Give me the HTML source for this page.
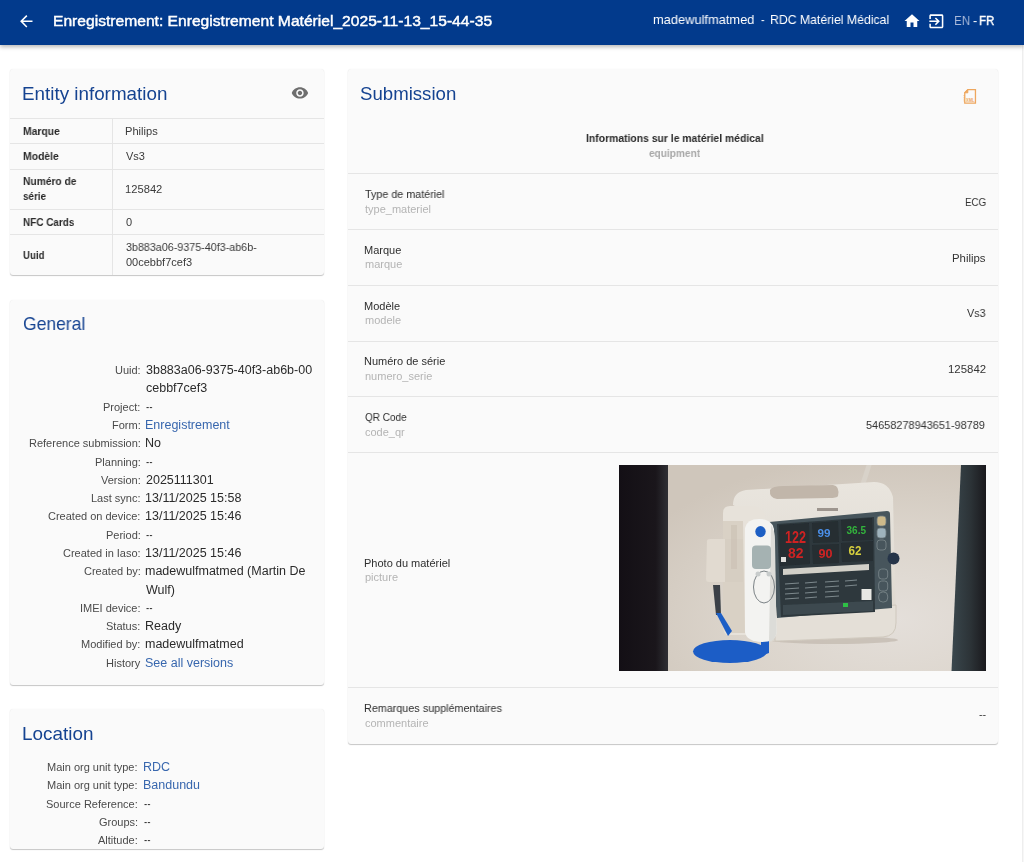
<!DOCTYPE html>
<html><head><meta charset="utf-8">
<style>
*{box-sizing:border-box;margin:0;padding:0}
html,body{width:1024px;height:862px;overflow:hidden;background:#fff;font-family:"Liberation Sans",sans-serif}
.x{position:absolute;white-space:pre;transform-origin:0 0;z-index:10;will-change:transform}
.hdr{position:absolute;left:0;top:0;width:1024px;height:44.5px;background:#023a8c;box-shadow:0 2px 4px rgba(0,0,0,.28);z-index:5}
.sb{position:absolute;left:1022px;top:44px;width:2px;height:818px;background:#f7f7f7;border-left:1px solid #eeeeee}
.card{position:absolute;background:#fafafa;border-radius:3px;box-shadow:0 1px 1px rgba(0,0,0,.22),0 0 1px rgba(0,0,0,.10)}
.hl{position:absolute;height:1px;background:#e5e5e5}
.vl{position:absolute;width:1px;background:#e5e5e5}
svg{position:absolute}
</style></head><body>
<div class="hdr">
  <svg style="left:16.7px;top:11.5px" width="18.6" height="18.6" viewBox="0 0 24 24"><path d="M20 11H7.83l5.59-5.59L12 4l-8 8 8 8 1.41-1.41L7.83 13H20v-2z" fill="#fff"/></svg>
  <svg style="left:902.8px;top:12.2px" width="18" height="18" viewBox="0 0 24 24"><path d="M10 20v-6h4v6h5v-8h3L12 3 2 12h3v8z" fill="#fff"/></svg>
  <svg style="left:926.7px;top:11.7px" width="18.7" height="18.7" viewBox="0 0 24 24"><path d="M10.09 15.59L11.5 17l5-5-5-5-1.41 1.41L12.67 11H3v2h9.67l-2.58 2.59zM19 3H5c-1.11 0-2 .9-2 2v4h2V5h14v14H5v-4H3v4c0 1.1.89 2 2 2h14c1.1 0 2-.9 2-2V5c0-1.1-.9-2-2-2z" fill="#fff"/></svg>
</div>
<div class="sb"></div>

<!-- Entity information -->
<div class="card" style="left:10px;top:68.5px;width:314px;height:206.5px"></div>
<div class="hl" style="left:10px;top:118px;width:314px"></div>
<div class="hl" style="left:10px;top:143px;width:314px"></div>
<div class="hl" style="left:10px;top:169px;width:314px"></div>
<div class="hl" style="left:10px;top:209px;width:314px"></div>
<div class="hl" style="left:10px;top:234px;width:314px"></div>
<div class="vl" style="left:112px;top:118px;height:157px"></div>
<svg style="left:291.3px;top:84.4px" width="17.9" height="17.9" viewBox="0 0 24 24"><path d="M12 4.5C7 4.5 2.73 7.61 1 12c1.73 4.39 6 7.5 11 7.5s9.27-3.11 11-7.5c-1.73-4.39-6-7.5-11-7.5zM12 17c-2.76 0-5-2.24-5-5s2.24-5 5-5 5 2.24 5 5-2.24 5-5 5zm0-8c-1.66 0-3 1.34-3 3s1.34 3 3 3 3-1.34 3-3-1.34-3-3-3z" fill="#6e6e6e"/></svg>

<!-- General -->
<div class="card" style="left:10px;top:299.5px;width:314px;height:385.5px"></div>

<!-- Location -->
<div class="card" style="left:10px;top:708.6px;width:314px;height:140.8px"></div>

<!-- Submission -->
<div class="card" style="left:347.5px;top:68.6px;width:650.5px;height:675.2px"></div>
<div class="hl" style="left:347.5px;top:172.5px;width:650.5px"></div>
<div class="hl" style="left:347.5px;top:228.8px;width:650.5px"></div>
<div class="hl" style="left:347.5px;top:284.8px;width:650.5px"></div>
<div class="hl" style="left:347.5px;top:340.5px;width:650.5px"></div>
<div class="hl" style="left:347.5px;top:396px;width:650.5px"></div>
<div class="hl" style="left:347.5px;top:451.8px;width:650.5px"></div>
<div class="hl" style="left:347.5px;top:687px;width:650.5px"></div>
<svg style="left:963px;top:88px" width="14" height="17" viewBox="0 0 14 17">
  <path d="M4.8 1.55 H12.45 V15.15 H1.75 V4.8 Z" fill="none" stroke="#eea75e" stroke-width="1.3" stroke-linejoin="miter"/>
  <path d="M1.75 4.8 L4.8 1.55 L4.8 4.8 Z" fill="#eea75e" stroke="#eea75e" stroke-width="1"/>
  <g stroke="#eea75e" stroke-width="0.8"><path d="M0.6 7.5H1.8M0.6 9.3H1.8M0.6 11.1H1.8M0.6 12.9H1.8"/></g>
  <text x="3.1" y="14.3" font-size="5.6" font-family="Liberation Sans" font-weight="bold" fill="#eea75e" textLength="8.4" lengthAdjust="spacingAndGlyphs">XML</text>
</svg>

<!-- Photo -->
<svg style="left:619px;top:465px" width="367" height="206" viewBox="0 0 367 206">
  <defs>
    <linearGradient id="bg" x1="0" y1="0" x2="1" y2="0.35">
      <stop offset="0" stop-color="#d3cbc1"/>
      <stop offset="0.5" stop-color="#ddd7cf"/>
      <stop offset="1" stop-color="#e9e5e1"/>
    </linearGradient>
    <linearGradient id="lb" x1="0" y1="0" x2="1" y2="0">
      <stop offset="0" stop-color="#130f15"/>
      <stop offset="0.75" stop-color="#1a161b"/>
      <stop offset="1" stop-color="#2f2f34"/>
    </linearGradient>
    <linearGradient id="rb" x1="0" y1="0" x2="1" y2="0">
      <stop offset="0" stop-color="#3a474d"/>
      <stop offset="0.55" stop-color="#2c3337"/>
      <stop offset="1" stop-color="#1a191d"/>
    </linearGradient>
    <linearGradient id="top" x1="0" y1="0" x2="0" y2="1">
      <stop offset="0" stop-color="#e9e5de"/>
      <stop offset="1" stop-color="#dcd6cd"/>
    </linearGradient>
    <radialGradient id="vig" cx="0.75" cy="0.75" r="0.8"><stop offset="0" stop-color="#e4dfda"/><stop offset="0.55" stop-color="#dbd4cb"/><stop offset="1" stop-color="#cfc6bb"/></radialGradient>
    <filter id="soft" filterUnits="userSpaceOnUse" x="0" y="0" width="367" height="206"><feGaussianBlur stdDeviation="0.5"/></filter>
  </defs>
  <rect width="367" height="206" fill="url(#vig)"/>
  <rect x="0" y="0" width="49" height="206" fill="url(#lb)"/>
  <path d="M342 0 H367 V206 H332.5 Z" fill="url(#rb)"/>
  <g filter="url(#soft)">
    <!-- shadow under device -->
    <ellipse cx="215" cy="175" rx="64" ry="4" fill="#c4bbb1" opacity="0.8"/>
    <!-- antenna -->
    <path d="M247.5 0 L252.5 0 L244.5 25 L239.5 25 Z" fill="#d8d2c9"/>
    <!-- main body -->
    <path d="M114 40 Q114 27 127 25 L255 17 Q270 17 274 32 L277 158 Q277 171 264 172 L160 176 L152 176 L150 60 Z" fill="url(#top)"/>
    <!-- recess -->
    <path d="M151 25 Q153 21 165 21 L214 20 Q221 21 219 31 Q218 33 210 33 L158 34 Q150 33 151 25 Z" fill="#c1b6aa"/>
    <!-- philips -->
    <rect x="198" y="43" width="21" height="3" fill="#8f8780" opacity="0.85"/>
    <!-- side module -->
    <path d="M104 48 Q104 41 111 41 L134 41 Q142 42 146 50 L150 170 L108 170 Q104 168 104 160 Z" fill="#e7e2da"/>
    <path d="M104 56 L124 56 L126 168 L108 168 Q104 166 104 160 Z" fill="#d9d1c5"/>
    <!-- lower module -->
    <path d="M88 76 Q88 74 91 74 L106 74 L106 117 L90 117 Q87 117 87 114 Z" fill="#e1dad0"/>
    <path d="M106 74 L124 74 L124 117 L106 117 Z" fill="#d6cec2"/>
    <rect x="112" y="60" width="6" height="44" fill="#c9c0b3" opacity="0.6"/>
    <!-- cable -->
    <path d="M94 120 L101 120 L102 150 L97 150 Z" fill="#3a4046"/>
    <path d="M97 148 L102 148 L113 166 L109 171 Z" fill="#1f5ec6"/>
    <!-- blue coil -->
    <ellipse cx="111" cy="186.5" rx="37" ry="11.5" fill="#1d5dc6"/>
    <path d="M142 175 L150 175 L150 188 L142 191 Z" fill="#1d5dc6"/>
    <!-- lower face below screen -->
    <path d="M156 150 L277 140 L277 158 Q277 171 264 172 L160 176 L156 176 Z" fill="#e4dfd7" stroke="#cfc8bd" stroke-width="1"/>
    <!-- screen bezel -->
    <path d="M150 57 L268 46 Q271 46 271 49 L273 143 L158 153 Z" fill="#46555b"/>
    <!-- display -->
    <path d="M158 59 L255 52 L256 147 L162 152 Z" fill="#2e383d"/>
    <!-- panels -->
    <path d="M160 60 L190 58 L191 99 L161 101 Z" fill="#252d31"/>
    <path d="M193 58 L219 56 L220 77 L194 78 Z" fill="#252d31"/>
    <path d="M193 80 L220 79 L220 98 L194 99 Z" fill="#252d31"/>
    <path d="M222 55 L253 53 L254 75 L223 76 Z" fill="#252d31"/>
    <path d="M222 78 L254 76 L254 96 L223 97 Z" fill="#252d31"/>
    <!-- table header bar -->
    <path d="M164 104 L250 99 L250 105 L164 110 Z" fill="#d2d0c8"/>
    <g stroke="#7d898d" stroke-width="1">
      <path d="M166 119 L180 118"/><path d="M186 118 L198 117"/><path d="M206 117 L220 116"/><path d="M226 116 L238 115"/>
      <path d="M166 124 L180 123"/><path d="M186 123 L198 122"/><path d="M206 122 L220 121"/><path d="M226 121 L238 120"/>
      <path d="M166 129 L180 128"/><path d="M186 128 L198 127"/><path d="M206 127 L220 126"/>
      <path d="M166 134 L180 133"/><path d="M186 133 L198 132"/><path d="M206 132 L220 131"/>
    </g>
    <rect x="242.5" y="124" width="10" height="11" fill="#e8e8e4"/>
    <path d="M164 140 L254 136 L254 146 L164 150 Z" fill="#3c494f"/>
    <rect x="224" y="138" width="5" height="4" fill="#2fc044"/>
    <rect x="162" y="92" width="5" height="5" fill="#e0e0dc"/>
    <!-- vitals -->
    <text x="166" y="78.4" font-family="Liberation Sans" font-weight="bold" font-size="16" fill="#cf2424" textLength="21" lengthAdjust="spacingAndGlyphs">122</text>
    <text x="169" y="93.4" font-family="Liberation Sans" font-weight="bold" font-size="15" fill="#cf2424" textLength="15.5" lengthAdjust="spacingAndGlyphs">82</text>
    <text x="198.5" y="72" font-family="Liberation Sans" font-weight="bold" font-size="11.5" fill="#4b8fe8" textLength="13" lengthAdjust="spacingAndGlyphs">99</text>
    <text x="227.5" y="68.7" font-family="Liberation Sans" font-weight="bold" font-size="11" fill="#33b33c" textLength="19.5" lengthAdjust="spacingAndGlyphs">36.5</text>
    <text x="199.5" y="93.4" font-family="Liberation Sans" font-weight="bold" font-size="13" fill="#cf2424" textLength="14" lengthAdjust="spacingAndGlyphs">90</text>
    <text x="229.6" y="90.2" font-family="Liberation Sans" font-weight="bold" font-size="13" fill="#d6cf3e" textLength="13" lengthAdjust="spacingAndGlyphs">62</text>
    <!-- side buttons -->
    <rect x="258" y="51" width="9" height="10" rx="3" fill="#cdb98a" stroke="#6e7b80" stroke-width="0.8"/>
    <rect x="258" y="63" width="9" height="10" rx="3" fill="#9fb3bd" stroke="#6e7b80" stroke-width="0.8"/>
    <rect x="258" y="75" width="9" height="10" rx="3" fill="none" stroke="#7d898d" stroke-width="0.8"/>
    <rect x="259.7" y="104" width="9" height="10" rx="3" fill="none" stroke="#7d898d" stroke-width="0.8"/>
    <rect x="259.7" y="116" width="9" height="10" rx="3" fill="none" stroke="#7d898d" stroke-width="0.8"/>
    <rect x="259.7" y="127" width="9" height="10" rx="4" fill="none" stroke="#7d898d" stroke-width="0.8"/>
    <!-- knob -->
    <circle cx="274.5" cy="93.4" r="6" fill="#26344a"/>
    <!-- probe -->
    <path d="M126 63 Q128 54 140 54 Q153 54 155 64 L157.5 168 Q156 177 143 177 Q127 176 126 167 Z" fill="#f3f3f1"/>
    <path d="M152 60 Q156 66 156 75 L157.5 168 Q156 176 150 177 Z" fill="#dcdcd8"/>
    <ellipse cx="141.5" cy="66.6" rx="5.2" ry="5.6" fill="#1f5ec4"/>
    <rect x="133" y="80.5" width="19" height="23.5" rx="4" fill="#a5b2b2"/>
    <ellipse cx="145" cy="122" rx="10.5" ry="16" fill="none" stroke="#5c6569" stroke-width="0.8"/>
    <circle cx="139" cy="109" r="2.5" fill="#c8cccc"/>
    <circle cx="150" cy="109" r="2.5" fill="#c8cccc"/>
  </g>
</svg>

<div class="x" style="left:53.39px;top:12.00px;font-size:15.5px;line-height:17px;color:#ffffff;-webkit-text-stroke:0.45px #fff;transform:scaleX(1.0078);">Enregistrement: Enregistrement Matériel_2025-11-13_15-44-35</div>
<div class="x" style="left:653.41px;top:12.00px;font-size:13px;line-height:15px;color:#ffffff;transform:scaleX(0.9881);">madewulfmatmed</div>
<div class="x" style="left:761.30px;top:12.00px;font-size:13px;line-height:15px;color:#ffffff;transform:scaleX(0.8250);">-</div>
<div class="x" style="left:770.26px;top:12.00px;font-size:13px;line-height:15px;color:#ffffff;transform:scaleX(0.9424);">RDC Matériel Médical</div>
<div class="x" style="left:953.81px;top:13.00px;font-size:13px;line-height:15px;color:#a9b9d9;transform:scaleX(0.8938);">EN</div>
<div class="x" style="left:973.10px;top:13.00px;font-size:13px;line-height:15px;color:#ffffff;transform:scaleX(0.9500);">-</div>
<div class="x" style="left:979.22px;top:13.00px;font-size:13px;line-height:15px;color:#ffffff;-webkit-text-stroke:0.45px #fff;transform:scaleX(0.8812);">FR</div>
<div class="x" style="left:22.48px;top:83.00px;font-size:18.5px;line-height:21px;color:#154391;transform:scaleX(1.0170);">Entity information</div>
<div class="x" style="left:23.30px;top:125.00px;font-size:11px;line-height:12px;color:#2a2a2a;font-weight:700;transform:scaleX(0.9410);">Marque</div>
<div class="x" style="left:124.59px;top:125.00px;font-size:11px;line-height:12px;color:#3a3a3a;transform:scaleX(1.0097);">Philips</div>
<div class="x" style="left:23.30px;top:150.00px;font-size:11px;line-height:12px;color:#2a2a2a;font-weight:700;transform:scaleX(0.9447);">Modèle</div>
<div class="x" style="left:125.60px;top:150.00px;font-size:11px;line-height:12px;color:#3a3a3a;">Vs3</div>
<div class="x" style="left:23.30px;top:175.00px;font-size:11px;line-height:12px;color:#2a2a2a;font-weight:700;transform:scaleX(0.9316);">Numéro de</div>
<div class="x" style="left:23.30px;top:190.00px;font-size:11px;line-height:12px;color:#2a2a2a;font-weight:700;transform:scaleX(0.9000);">série</div>
<div class="x" style="left:124.58px;top:183.00px;font-size:11px;line-height:12px;color:#3a3a3a;transform:scaleX(1.0171);">125842</div>
<div class="x" style="left:23.20px;top:216.00px;font-size:11px;line-height:12px;color:#2a2a2a;font-weight:700;transform:scaleX(0.9035);">NFC Cards</div>
<div class="x" style="left:125.50px;top:216.00px;font-size:11px;line-height:12px;color:#3a3a3a;">0</div>
<div class="x" style="left:23.20px;top:249.00px;font-size:11px;line-height:12px;color:#2a2a2a;font-weight:700;transform:scaleX(0.8792);">Uuid</div>
<div class="x" style="left:125.50px;top:241.00px;font-size:11px;line-height:12px;color:#3a3a3a;transform:scaleX(0.9761);">3b883a06-9375-40f3-ab6b-</div>
<div class="x" style="left:125.50px;top:256.00px;font-size:11px;line-height:12px;color:#3a3a3a;">00cebbf7cef3</div>
<div class="x" style="left:22.80px;top:313.00px;font-size:18.5px;line-height:21px;color:#154391;transform:scaleX(0.9453);">General</div>
<div class="x" style="left:114.50px;top:364.00px;font-size:11px;line-height:12px;color:#4a4a4a;">Uuid:</div>
<div class="x" style="left:146.00px;top:363.00px;font-size:12.5px;line-height:14px;color:#2b2b2b;">3b883a06-9375-40f3-ab6b-00</div>
<div class="x" style="left:146.00px;top:381.00px;font-size:12.5px;line-height:14px;color:#2b2b2b;">cebbf7cef3</div>
<div class="x" style="left:102.50px;top:401.00px;font-size:11px;line-height:12px;color:#4a4a4a;">Project:</div>
<div class="x" style="left:146.00px;top:400.00px;font-size:12.5px;line-height:14px;color:#2b2b2b;transform:scaleX(0.7750);">--</div>
<div class="x" style="left:111.50px;top:419.00px;font-size:11px;line-height:12px;color:#4a4a4a;">Form:</div>
<div class="x" style="left:145.00px;top:418.00px;font-size:12.5px;line-height:14px;color:#3867ae;">Enregistrement</div>
<div class="x" style="left:28.50px;top:437.00px;font-size:11px;line-height:12px;color:#4a4a4a;">Reference submission:</div>
<div class="x" style="left:145.00px;top:436.00px;font-size:12.5px;line-height:14px;color:#2b2b2b;">No</div>
<div class="x" style="left:94.50px;top:456.00px;font-size:11px;line-height:12px;color:#4a4a4a;">Planning:</div>
<div class="x" style="left:146.00px;top:455.00px;font-size:12.5px;line-height:14px;color:#2b2b2b;transform:scaleX(0.7750);">--</div>
<div class="x" style="left:100.50px;top:474.00px;font-size:11px;line-height:12px;color:#4a4a4a;">Version:</div>
<div class="x" style="left:146.00px;top:473.00px;font-size:12.5px;line-height:14px;color:#2b2b2b;">2025111301</div>
<div class="x" style="left:90.50px;top:492.00px;font-size:11px;line-height:12px;color:#4a4a4a;">Last sync:</div>
<div class="x" style="left:145.00px;top:491.00px;font-size:12.5px;line-height:14px;color:#2b2b2b;">13/11/2025 15:58</div>
<div class="x" style="left:47.50px;top:510.00px;font-size:11px;line-height:12px;color:#4a4a4a;">Created on device:</div>
<div class="x" style="left:145.00px;top:509.00px;font-size:12.5px;line-height:14px;color:#2b2b2b;">13/11/2025 15:46</div>
<div class="x" style="left:105.50px;top:529.00px;font-size:11px;line-height:12px;color:#4a4a4a;">Period:</div>
<div class="x" style="left:146.00px;top:528.00px;font-size:12.5px;line-height:14px;color:#2b2b2b;transform:scaleX(0.7750);">--</div>
<div class="x" style="left:62.50px;top:547.00px;font-size:11px;line-height:12px;color:#4a4a4a;">Created in Iaso:</div>
<div class="x" style="left:145.00px;top:546.00px;font-size:12.5px;line-height:14px;color:#2b2b2b;">13/11/2025 15:46</div>
<div class="x" style="left:83.50px;top:565.00px;font-size:11px;line-height:12px;color:#4a4a4a;">Created by:</div>
<div class="x" style="left:145.00px;top:564.00px;font-size:12.5px;line-height:14px;color:#2b2b2b;">madewulfmatmed (Martin De</div>
<div class="x" style="left:146.00px;top:583.00px;font-size:12.5px;line-height:14px;color:#2b2b2b;">Wulf)</div>
<div class="x" style="left:79.50px;top:602.00px;font-size:11px;line-height:12px;color:#4a4a4a;">IMEI device:</div>
<div class="x" style="left:146.00px;top:601.00px;font-size:12.5px;line-height:14px;color:#2b2b2b;transform:scaleX(0.7750);">--</div>
<div class="x" style="left:105.50px;top:620.00px;font-size:11px;line-height:12px;color:#4a4a4a;">Status:</div>
<div class="x" style="left:145.00px;top:619.00px;font-size:12.5px;line-height:14px;color:#2b2b2b;">Ready</div>
<div class="x" style="left:80.50px;top:638.00px;font-size:11px;line-height:12px;color:#4a4a4a;">Modified by:</div>
<div class="x" style="left:145.00px;top:637.00px;font-size:12.5px;line-height:14px;color:#2b2b2b;">madewulfmatmed</div>
<div class="x" style="left:105.50px;top:657.00px;font-size:11px;line-height:12px;color:#4a4a4a;">History</div>
<div class="x" style="left:145.00px;top:656.00px;font-size:12.5px;line-height:14px;color:#3867ae;">See all versions</div>
<div class="x" style="left:22.28px;top:723.00px;font-size:18.5px;line-height:21px;color:#154391;transform:scaleX(1.0206);">Location</div>
<div class="x" style="left:46.80px;top:761.00px;font-size:11px;line-height:12px;color:#4a4a4a;">Main org unit type:</div>
<div class="x" style="left:143.30px;top:760.00px;font-size:12.5px;line-height:14px;color:#3867ae;">RDC</div>
<div class="x" style="left:46.80px;top:779.00px;font-size:11px;line-height:12px;color:#4a4a4a;">Main org unit type:</div>
<div class="x" style="left:143.30px;top:778.00px;font-size:12.5px;line-height:14px;color:#3867ae;">Bandundu</div>
<div class="x" style="left:45.80px;top:798.00px;font-size:11px;line-height:12px;color:#4a4a4a;">Source Reference:</div>
<div class="x" style="left:144.30px;top:797.00px;font-size:12.5px;line-height:14px;color:#2b2b2b;transform:scaleX(0.7750);">--</div>
<div class="x" style="left:98.80px;top:816.00px;font-size:11px;line-height:12px;color:#4a4a4a;">Groups:</div>
<div class="x" style="left:144.30px;top:815.00px;font-size:12.5px;line-height:14px;color:#2b2b2b;transform:scaleX(0.7750);">--</div>
<div class="x" style="left:97.80px;top:834.00px;font-size:11px;line-height:12px;color:#4a4a4a;">Altitude:</div>
<div class="x" style="left:144.30px;top:833.00px;font-size:12.5px;line-height:14px;color:#2b2b2b;transform:scaleX(0.7750);">--</div>
<div class="x" style="left:359.79px;top:83.00px;font-size:18.5px;line-height:21px;color:#154391;transform:scaleX(1.0064);">Submission</div>
<div class="x" style="left:586.20px;top:132.00px;font-size:11px;line-height:12px;color:#2a2a2a;font-weight:700;transform:scaleX(0.9436);">Informations sur le matériel médical</div>
<div class="x" style="left:649.15px;top:147.00px;font-size:11px;line-height:12px;color:#a8a8a8;font-weight:700;transform:scaleX(0.9196);">equipment</div>
<div class="x" style="left:364.70px;top:188.00px;font-size:11px;line-height:12px;color:#2e2e2e;transform:scaleX(0.9778);">Type de matériel</div>
<div class="x" style="left:364.70px;top:203.00px;font-size:11px;line-height:12px;color:#b4b4b4;">type_materiel</div>
<div class="x" style="left:964.81px;top:196.00px;font-size:11px;line-height:12px;color:#333333;transform:scaleX(0.8909);">ECG</div>
<div class="x" style="left:363.70px;top:244.00px;font-size:11px;line-height:12px;color:#2e2e2e;">Marque</div>
<div class="x" style="left:364.70px;top:258.00px;font-size:11px;line-height:12px;color:#b4b4b4;">marque</div>
<div class="x" style="left:952.16px;top:252.00px;font-size:11px;line-height:12px;color:#333333;transform:scaleX(1.0355);">Philips</div>
<div class="x" style="left:363.70px;top:300.00px;font-size:11px;line-height:12px;color:#2e2e2e;">Modèle</div>
<div class="x" style="left:364.70px;top:314.00px;font-size:11px;line-height:12px;color:#b4b4b4;">modele</div>
<div class="x" style="left:966.60px;top:307.00px;font-size:11px;line-height:12px;color:#333333;transform:scaleX(0.9842);">Vs3</div>
<div class="x" style="left:363.70px;top:355.00px;font-size:11px;line-height:12px;color:#2e2e2e;">Numéro de série</div>
<div class="x" style="left:364.70px;top:370.00px;font-size:11px;line-height:12px;color:#b4b4b4;">numero_serie</div>
<div class="x" style="left:947.96px;top:363.00px;font-size:11px;line-height:12px;color:#333333;transform:scaleX(1.0371);">125842</div>
<div class="x" style="left:364.70px;top:411.00px;font-size:11px;line-height:12px;color:#2e2e2e;transform:scaleX(0.9087);">QR Code</div>
<div class="x" style="left:364.70px;top:426.00px;font-size:11px;line-height:12px;color:#b4b4b4;">code_qr</div>
<div class="x" style="left:866.30px;top:419.00px;font-size:11px;line-height:12px;color:#333333;transform:scaleX(0.9917);">54658278943651-98789</div>
<div class="x" style="left:363.60px;top:557.00px;font-size:11px;line-height:12px;color:#2e2e2e;">Photo du matériel</div>
<div class="x" style="left:364.60px;top:571.00px;font-size:11px;line-height:12px;color:#b4b4b4;">picture</div>
<div class="x" style="left:363.62px;top:702.00px;font-size:11px;line-height:12px;color:#2e2e2e;transform:scaleX(0.9807);">Remarques supplémentaires</div>
<div class="x" style="left:364.60px;top:717.00px;font-size:11px;line-height:12px;color:#b4b4b4;">commentaire</div>
<div class="x" style="left:979.40px;top:708.00px;font-size:11px;line-height:12px;color:#333333;transform:scaleX(0.9429);">--</div>
</body></html>
